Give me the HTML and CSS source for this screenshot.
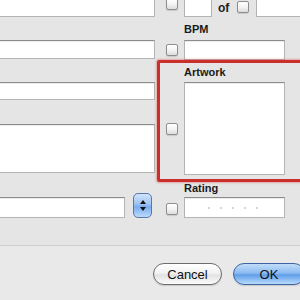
FILE: index.html
```html
<!DOCTYPE html>
<html lang="en">
<head>
    <meta charset="UTF-8">
    <meta name="viewport" content="width=device-width, initial-scale=1.0">
    <title>Get Info</title>
    <link rel="stylesheet" href="styles.css">
</head>
<body>
    <div class="dialog">
        <div class="form">
            <div class="col-left">
                <div class="field f1"></div>
                <div class="field f2"></div>
                <div class="field f3"></div>
                <div class="field f4"></div>
                <div class="row-combo">
                    <div class="field f5"></div>
                    <div class="stepper">
                        <span class="arrow up"></span>
                        <span class="arrow down"></span>
                    </div>
                </div>
            </div>

            <div class="col-right">
                <div class="row row-track">
                    <span class="check check-top"></span>
                    <div class="field small"></div>
                    <span class="of">of</span>
                    <span class="check check-of"></span>
                    <div class="field of-field"></div>
                </div>

                <div class="label label-bpm">BPM</div>
                <div class="row row-bpm">
                    <span class="check"></span>
                    <div class="field wide"></div>
                </div>

                <div class="label label-art">Artwork</div>
                <div class="row row-art">
                    <span class="check"></span>
                    <div class="field wide artwork"></div>
                </div>

                <div class="label label-rating">Rating</div>
                <div class="row row-rating">
                    <span class="check check-rating"></span>
                    <div class="field wide rating">
                        <span class="dot"></span>
                        <span class="dot"></span>
                        <span class="dot"></span>
                        <span class="dot"></span>
                        <span class="dot"></span>
                    </div>
                </div>
            </div>

            <!-- annotation box round the artwork -->
            <div class="highlight"></div>
        </div>

        <div class="buttons">
            <button class="btn cancel">Cancel</button>
            <button class="btn ok">OK</button>
        </div>
    </div>
</body>
</html>
```

FILE: styles.css
```css
body {
    font-family: 'Liberation Sans', Arial, sans-serif;
    background-color: #e9e9e9;
    margin: 0;
    padding: 0;
    width: 300px;
    height: 300px;
    overflow: hidden;
}

.dialog {
    width: 300px;
    height: 300px;
    overflow: hidden;
}

.form {
    position: relative;
    display: flex;
    height: 245px;
    background-color: #e5e5e5;
    border-bottom: 1px solid #cfcfcf;
    overflow: hidden;
}

.field {
    box-sizing: border-box;
    background: #fff;
    border: 1px solid #b4b4b4;
    border-top-color: #8c8c8c;
    box-shadow: inset 0 1px 0 #ececec;
}

/* left column */
.col-left {
    display: flex;
    flex-direction: column;
    width: 165px;
    margin-left: -10px;
    flex-shrink: 0;
}

.f1 {
    height: 20px;
    margin-top: -3px;
}

.f2 {
    height: 19px;
    margin-top: 23px;
}

.f3 {
    height: 18px;
    margin-top: 23px;
}

.f4 {
    height: 49px;
    margin-top: 24px;
}

.row-combo {
    display: flex;
    align-items: flex-end;
    height: 26px;
    margin-top: 19px;
}

.f5 {
    width: 135px;
    height: 21px;
}

.stepper {
    box-sizing: border-box;
    width: 19px;
    height: 25px;
    margin-left: 8px;
    border: 1px solid #5877ad;
    border-radius: 5px;
    background: linear-gradient(#d3e4fa, #9cc2f2 45%, #78acef 55%, #bcdafc);
    display: flex;
    flex-direction: column;
    align-items: center;
    justify-content: center;
    gap: 3px;
}

.arrow {
    width: 0;
    height: 0;
    border-left: 3px solid transparent;
    border-right: 3px solid transparent;
}

.arrow.up {
    border-bottom: 4px solid #111;
}

.arrow.down {
    border-top: 4px solid #111;
}

/* right column */
.col-right {
    display: flex;
    flex-direction: column;
    margin-left: 11px;
    flex-shrink: 0;
}

.row {
    display: flex;
    align-items: center;
}

.check {
    box-sizing: border-box;
    width: 12px;
    height: 12px;
    margin-right: 6px;
    border: 1px solid #8d8d8d;
    border-radius: 2px;
    background: linear-gradient(#ffffff, #f4f4f4 50%, #dcdcdc);
    box-shadow: 0 1px 1px rgba(0, 0, 0, 0.12);
    flex-shrink: 0;
}

.row-track {
    align-items: flex-start;
    height: 20px;
    margin-top: -3px;
}

.check-top {
    margin-top: 1px;
}

.field.small {
    width: 28px;
    height: 20px;
}

.of {
    margin-left: 6px;
    padding-top: 4px;
    font-size: 12px;
    font-weight: bold;
    color: #222;
    line-height: 14px;
}

.check-of {
    margin-left: 8px;
    margin-right: 7px;
    margin-top: 4px;
}

.of-field {
    width: 50px;
    height: 20px;
    flex-shrink: 0;
}

.label {
    margin-left: 18px;
    font-size: 11px;
    font-weight: bold;
    line-height: 13px;
    color: #1a1a1a;
}

.label-bpm {
    margin-top: 6px;
}

.row-bpm {
    margin-top: 4px;
}

.field.wide {
    width: 101px;
    height: 20px;
}

.label-art {
    margin-top: 6px;
}

.row-art {
    margin-top: 3px;
}

.field.artwork {
    height: 93px;
}

.label-rating {
    margin-top: 7px;
}

.row-rating {
    margin-top: 2px;
}

.check-rating {
    margin-top: 2px;
}

.field.rating {
    height: 21px;
    display: flex;
    align-items: center;
    gap: 10px;
    padding-left: 23px;
}

.dot {
    width: 2px;
    height: 2px;
    border-radius: 50%;
    background: #c4c4c4;
}

.highlight {
    position: absolute;
    left: 157px;
    top: 60px;
    width: 160px;
    height: 122px;
    box-sizing: border-box;
    border: 3px solid #c9302c;
    border-radius: 2px;
    box-shadow: 0 0 2px 1px rgba(220, 90, 90, 0.45);
}

/* buttons */
.buttons {
    display: flex;
    gap: 11px;
    padding-top: 17px;
    padding-left: 153px;
}

.btn {
    box-sizing: border-box;
    height: 22px;
    border-radius: 11px;
    font-family: 'Liberation Sans', Arial, sans-serif;
    font-size: 13px;
    color: #111;
    padding: 0;
    box-shadow: 0 1px 1px rgba(0, 0, 0, 0.15);
    flex-shrink: 0;
}

.cancel {
    width: 69px;
    border: 1px solid #6d6d6d;
    background: linear-gradient(#ffffff, #f2f2f2 45%, #e2e2e2 55%, #fbfbfb);
}

.ok {
    width: 72px;
    border: 1px solid #3f64a3;
    background: linear-gradient(#c3dcf8, #8cbcf2 45%, #5f9ee9 55%, #b9dcfb);
}
```
